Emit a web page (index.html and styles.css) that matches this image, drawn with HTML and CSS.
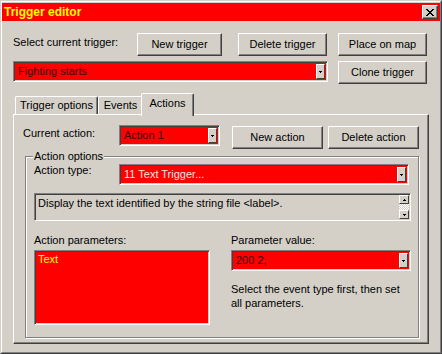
FILE: index.html
```html
<!DOCTYPE html>
<html>
<head>
<meta charset="utf-8">
<link rel="stylesheet" href="styles.css">
</head>
<body>
<div class="window">
  <div class="frame">
    <div class="titlebar">
      <span class="title">Trigger editor</span>
      <button class="close"><svg width="8" height="7" viewBox="0 0 8 7"><path d="M0 0h2v1H0zM6 0h2v1H6zM1 1h2v1H1zM5 1h2v1H5zM2 2h4v1H2zM3 3h2v1H3zM2 4h4v1H2zM1 5h2v1H1zM5 5h2v1H5zM0 6h2v1H0zM6 6h2v1H6z"/></svg></button>
    </div>
    <div class="body">
      <div class="row1">
        <span class="lbl lbl-trigger">Select current trigger:</span>
        <button class="btn w85">New trigger</button>
        <button class="btn w89 ml16">Delete trigger</button>
        <button class="btn w89 ml11">Place on map</button>
      </div>
      <div class="row2">
        <div class="combo c-trigger"><span class="val dark">Fighting starts</span><span class="arrow"><svg width="3" height="2" viewBox="0 0 3 2"><path d="M0 0h3v1H0zM1 1h1v1H1z"/></svg></span></div>
        <button class="btn w89 ml10">Clone trigger</button>
      </div>
      <div class="tabs">
        <div class="tab t-opt">Trigger options</div>
        <div class="tab t-ev">Events</div>
        <div class="tab t-act sel">Actions</div>
      </div>
      <div class="panel">
        <div class="row-action">
          <span class="lbl lbl-action">Current action:</span>
          <div class="combo c-action"><span class="val dark">Action 1</span><span class="arrow"><svg width="3" height="2" viewBox="0 0 3 2"><path d="M0 0h3v1H0zM1 1h1v1H1z"/></svg></span></div>
          <button class="btn w91 ml12 mt1">New action</button>
          <button class="btn w91 ml5 mt1">Delete action</button>
        </div>
        <fieldset class="group">
          <legend>Action options</legend>
          <div class="row-type">
            <span class="lbl lbl-type">Action type:</span>
            <div class="combo c-type"><span class="val light">11 Text Trigger...</span><span class="arrow"><svg width="3" height="2" viewBox="0 0 3 2"><path d="M0 0h3v1H0zM1 1h1v1H1z"/></svg></span></div>
          </div>
          <div class="desc">
            <span class="desc-text">Display the text identified by the string file &lt;label&gt;.</span>
            <div class="scroll">
              <span class="sbtn"><svg width="3" height="2" viewBox="0 0 3 2"><path d="M1 0h1v1H1zM0 1h3v1H0z"/></svg></span>
              <span class="track"></span>
              <span class="sbtn"><svg width="3" height="2" viewBox="0 0 3 2"><path d="M0 0h3v1H0zM1 1h1v1H1z"/></svg></span>
            </div>
          </div>
          <div class="params">
            <div class="col-left">
              <span class="lbl">Action parameters:</span>
              <div class="listbox"><span class="item">Text</span></div>
            </div>
            <div class="col-right">
              <span class="lbl">Parameter value:</span>
              <div class="combo c-value"><span class="val dark">200 2,</span><span class="arrow"><svg width="3" height="2" viewBox="0 0 3 2"><path d="M0 0h3v1H0zM1 1h1v1H1z"/></svg></span></div>
              <p class="help">Select the event type first, then set all parameters.</p>
            </div>
          </div>
        </fieldset>
      </div>
    </div>
  </div>
</div>
</body>
</html>
```
FILE: styles.css
```css
* { box-sizing: border-box; }
html, body { margin: 0; padding: 0; background: #d4d0c8; }
body {
  font-family: "Liberation Sans", Arial, sans-serif;
  font-size: 11px;
  line-height: 13px;
  color: #000;
}
.window {
  width: 442px;
  height: 354px;
  border: 1px solid;
  border-color: #d4d0c8 #404040 #404040 #d4d0c8;
  background: #d4d0c8;
}
.frame {
  height: 100%;
  border: 1px solid;
  border-color: #fff #808080 #808080 #fff;
  padding: 1px 0 0;
  display: flex;
  flex-direction: column;
}
.titlebar {
  height: 18px;
  background: #ff0000;
  display: flex;
  align-items: center;
  justify-content: space-between;
  padding-left: 2px;
}
.title {
  color: #ffff00;
  font-weight: bold;
  font-size: 12px;
}
.close {
  width: 16px;
  height: 14px;
  margin-right: 2px;
  padding: 0;
  background: #d4d0c8;
  border: 1px solid;
  border-color: #fff #404040 #404040 #fff;
  box-shadow: inset -1px -1px #808080;
  display: flex;
  align-items: center;
  justify-content: center;
}
.close svg { display: block; fill: #000; }
.body {
  flex: 1;
  padding: 12px 11px 0;
  display: flex;
  flex-direction: column;
}
.btn {
  font: inherit;
  color: #000;
  height: 23px;
  padding: 0;
  background: #d4d0c8;
  border: 1px solid;
  border-color: #fff #404040 #404040 #fff;
  box-shadow: inset -1px -1px #808080;
  text-align: center;
}
.w85 { width: 85px; }
.w89 { width: 89px; }
.w91 { width: 91px; }
.ml16 { margin-left: 16px; }
.ml11 { margin-left: 11px; }
.ml10 { margin-left: 10px; }
.ml12 { margin-left: 12px; }
.ml5 { margin-left: 5px; }
.mt1 { margin-top: 1px; }
.lbl { display: block; }
.row1 { display: flex; align-items: flex-start; }
.lbl-trigger { width: 124px; padding-top: 3px; }
.row2 { display: flex; align-items: flex-start; margin-top: 5px; }
.combo {
  display: flex;
  height: 21px;
  background: #ff0000;
  border: 1px solid;
  border-color: #808080 #fff #fff #808080;
  box-shadow: inset 1px 1px #404040, inset -1px -1px #d4d0c8;
  padding: 2px;
}
.val { flex: 1; padding-left: 2px; line-height: 15px; white-space: nowrap; overflow: hidden; }
.dark { color: #300000; }
.light { color: #ffe4e4; }
.arrow {
  width: 9px;
  background: #d4d0c8;
  border: 1px solid;
  border-color: #fff #404040 #404040 #fff;
  display: flex;
  align-items: center;
  justify-content: center;
}
.arrow svg { display: block; fill: #000; }
.c-trigger { width: 315px; }
.tabs {
  margin-top: 9px;
  height: 21px;
  display: flex;
  align-items: flex-end;
  padding-left: 2px;
}
.tab {
  height: 18px;
  border: 1px solid;
  border-bottom: none;
  border-color: #fff #404040 #404040 #fff;
  box-shadow: inset -1px 0 #808080;
  border-radius: 2px 2px 0 0;
  text-align: center;
  line-height: 16px;
  background: #d4d0c8;
}
.t-opt { width: 83px; }
.t-ev { width: 45px; }
.t-act { width: 53px; margin-left: -2px; }
.tab.sel {
  height: 23px;
  margin-bottom: -2px;
  position: relative;
  z-index: 1;
  line-height: 18px;
}
.panel {
  height: 230px;
  border: 1px solid;
  border-color: #fff #404040 #404040 #fff;
  box-shadow: inset -1px -1px #808080;
  padding: 10px 9px 0;
}
.row-action { display: flex; align-items: flex-start; }
.lbl-action { width: 96px; padding-top: 2px; }
.c-action { width: 101px; }
.group {
  margin: 1px 0 0 2px;
  width: 394px;
  border: 1px solid #808080;
  box-shadow: inset 1px 1px #fff, 1px 1px #fff;
  padding: 0 7px 12px 8px;
  min-width: 0;
}
.group legend {
  padding: 0 1px;
  margin-left: -1px;
  background: #d4d0c8;
  line-height: 13px;
}
.row-type { display: flex; align-items: flex-start; margin-top: 1px; }
.lbl-type { width: 85px; }
.c-type { width: 290px; }
.desc {
  margin-top: 8px;
  width: 377px;
  height: 28px;
  border: 1px solid;
  border-color: #808080 #fff #fff #808080;
  box-shadow: inset 1px 1px #404040, inset -1px -1px #d4d0c8;
  padding: 1px;
  display: flex;
}
.desc-text { flex: 1; padding: 2px 0 0 2px; white-space: nowrap; }
.scroll { width: 10px; display: flex; flex-direction: column; }
.sbtn {
  height: 9px;
  background: #d4d0c8;
  border: 1px solid;
  border-color: #fff #404040 #404040 #fff;
  display: flex;
  align-items: center;
  justify-content: center;
}
.sbtn svg { display: block; fill: #000; }
.track {
  flex: 1;
  background: repeating-conic-gradient(#fff 0 25%, #d4d0c8 0 50%) 0 0 / 2px 2px;
}
.params { display: flex; margin-top: 13px; }
.col-left { width: 177px; }
.col-right { margin-left: 21px; width: 180px; }
.listbox {
  margin-top: 3px;
  height: 75px;
  background: #ff0000;
  border: 1px solid;
  border-color: #808080 #fff #fff #808080;
  box-shadow: inset 1px 1px #404040, inset -1px -1px #d4d0c8;
  padding: 2px 3px;
}
.item { color: #ffff00; display: block; line-height: 13px; }
.c-value { margin-top: 3px; width: 180px; }
.help { margin: 11px 0 0; line-height: 14px; }
```
